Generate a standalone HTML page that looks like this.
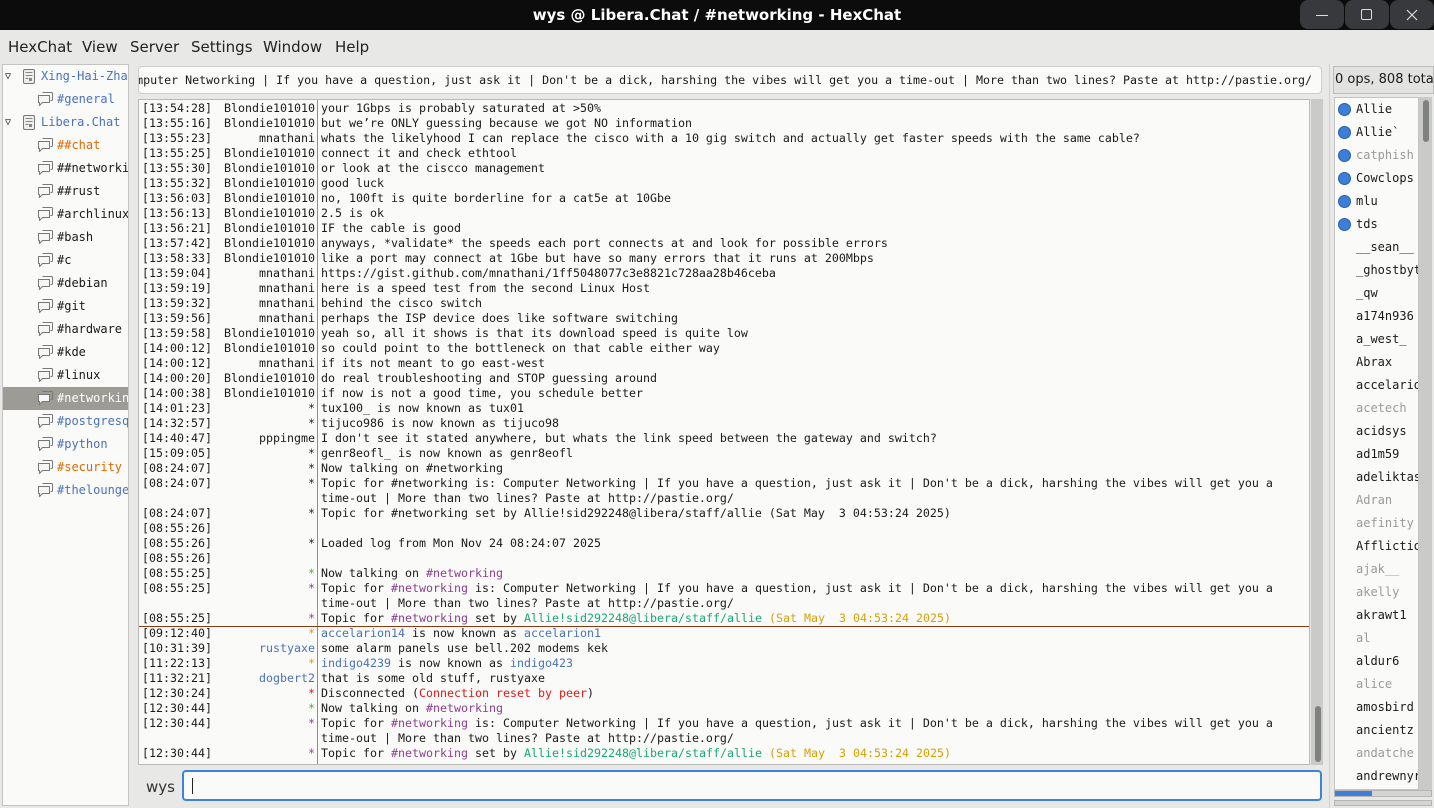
<!DOCTYPE html>
<html><head><meta charset="utf-8"><style>
*{margin:0;padding:0;box-sizing:border-box}
body{width:1434px;height:808px;overflow:hidden;background:#e8e8e7;font-family:"DejaVu Sans Mono","Liberation Mono",monospace;font-size:11.64px;color:#1a1a1a;position:relative}
.abs{position:absolute}
#title{left:0;top:0;width:1434px;height:30px;background:#0c0c0c;color:#fff;font-family:"DejaVu Sans","Liberation Sans",sans-serif;font-weight:bold;font-size:15px;text-align:center;line-height:30px}
.wb{top:0;width:44px;height:29px;background:#38393c;border-radius:8px}
#menu{left:0;top:30px;width:1434px;height:32px;font-family:"DejaVu Sans","Liberation Sans",sans-serif;font-size:15px;color:#222}
#menu span{position:absolute;top:8px}
#tree{left:2px;top:64px;width:127px;height:742px;background:#fafaf9;border:1px solid #c4c4c2;overflow:hidden;font-size:12px}
.tr{position:absolute;height:23px;line-height:23px;white-space:nowrap;left:0;width:127px}
.ic{position:absolute;top:3px}
#topic{left:138px;top:66px;width:1184px;height:28px;background:#fafaf9;border:1px solid #cfcfcd;border-radius:4px;overflow:hidden;white-space:nowrap;line-height:26px}
#chat{left:138px;top:99px;width:1172px;height:666px;background:#fafaf9;border:1px solid #b9b9b7;overflow:hidden}
.l{position:absolute;left:0;height:15px;line-height:15px;white-space:pre;width:1170px}
.ts{position:absolute;left:3px}
.nk{position:absolute;right:994px;text-align:right}
.mg{position:absolute;left:182px}
#sep{left:178px;top:0;width:1px;height:666px;background:#8e8e8c}
.g{color:#5fa81c}.p{color:#8b3f8e}.y{color:#d8a000}.r{color:#e01818}.b{color:#4a72b8}.t{color:#19a778}.gr{color:#9a9a98}.o{color:#e06a00}
#ul{left:1334px;top:97px;width:85px;height:693px;background:#fafaf9;border:1px solid #c4c4c2;overflow:hidden}
.u{position:absolute;left:21px;height:23px;line-height:23px;white-space:nowrap;font-size:12px}
.dot{position:absolute;top:5px;width:13px;height:13px;border-radius:50%;background:#3d7ed8;border:1px solid #2a5fa8}
</style></head><body>
<svg width="0" height="0" style="position:absolute"><defs>
<g id="bub"><path d="M5.5 1.5h9a1 1 0 0 1 1 1v6a1 1 0 0 1-1 1h-1" fill="none" stroke="#777"/><path d="M1.5 4.5h11v7h-7l-3 3v-3h-1z" fill="#f6f6f6" stroke="#777" stroke-linejoin="round"/></g>
<g id="srv"><rect x="2.5" y="1.5" width="11" height="14" rx="1.5" fill="#eee" stroke="#777"/><path d="M4.5 4.5h7M4.5 7.5h7M4.5 10.5h3" stroke="#888"/><rect x="8" y="10" width="3" height="3" fill="#888"/></g>
</defs></svg>
<div id="title" class="abs">wys @ Libera.Chat / #networking - HexChat</div>
<div class="abs wb" style="left:1300px"><div class="abs" style="left:16px;top:15px;width:12px;height:1px;background:#ddd"></div></div>
<div class="abs wb" style="left:1345px"><div class="abs" style="left:16px;top:9px;width:11px;height:11px;border:1px solid #ddd;border-radius:2px"></div></div>
<div class="abs wb" style="left:1390px"><svg class="abs" style="left:16px;top:9px" width="12" height="12"><path d="M1 1L11 11M11 1L1 11" stroke="#ddd" stroke-width="1.2"/></svg></div>
<div id="menu" class="abs"><span style="left:8px">HexChat</span><span style="left:82px">View</span><span style="left:130px">Server</span><span style="left:191px">Settings</span><span style="left:263px">Window</span><span style="left:335px">Help</span></div>

<div id="tree" class="abs">
<div class="tr" style="top:0"><span class="abs" style="left:2px;top:0;font-size:10px">▽</span><svg class="ic" style="left:18px" width="16" height="17"><use href="#srv"/></svg><span class="abs b" style="left:38px">Xing-Hai-Zhang</span></div>
<div class="tr" style="top:23px"><svg class="ic" style="left:34px" width="17" height="16"><use href="#bub"/></svg><span class="abs b" style="left:54px">#general</span></div>
<div class="tr" style="top:46px"><span class="abs" style="left:2px;top:0;font-size:10px">▽</span><svg class="ic" style="left:18px" width="16" height="17"><use href="#srv"/></svg><span class="abs b" style="left:38px">Libera.Chat</span></div>
<div class="tr" style="top:69px"><svg class="ic" style="left:34px" width="17" height="16"><use href="#bub"/></svg><span class="abs o" style="left:54px">##chat</span></div>
<div class="tr" style="top:92px"><svg class="ic" style="left:34px" width="17" height="16"><use href="#bub"/></svg><span class="abs" style="left:54px">##networking</span></div>
<div class="tr" style="top:115px"><svg class="ic" style="left:34px" width="17" height="16"><use href="#bub"/></svg><span class="abs" style="left:54px">##rust</span></div>
<div class="tr" style="top:138px"><svg class="ic" style="left:34px" width="17" height="16"><use href="#bub"/></svg><span class="abs" style="left:54px">#archlinux</span></div>
<div class="tr" style="top:161px"><svg class="ic" style="left:34px" width="17" height="16"><use href="#bub"/></svg><span class="abs" style="left:54px">#bash</span></div>
<div class="tr" style="top:184px"><svg class="ic" style="left:34px" width="17" height="16"><use href="#bub"/></svg><span class="abs" style="left:54px">#c</span></div>
<div class="tr" style="top:207px"><svg class="ic" style="left:34px" width="17" height="16"><use href="#bub"/></svg><span class="abs" style="left:54px">#debian</span></div>
<div class="tr" style="top:230px"><svg class="ic" style="left:34px" width="17" height="16"><use href="#bub"/></svg><span class="abs" style="left:54px">#git</span></div>
<div class="tr" style="top:253px"><svg class="ic" style="left:34px" width="17" height="16"><use href="#bub"/></svg><span class="abs" style="left:54px">#hardware</span></div>
<div class="tr" style="top:276px"><svg class="ic" style="left:34px" width="17" height="16"><use href="#bub"/></svg><span class="abs" style="left:54px">#kde</span></div>
<div class="tr" style="top:299px"><svg class="ic" style="left:34px" width="17" height="16"><use href="#bub"/></svg><span class="abs" style="left:54px">#linux</span></div>
<div class="tr" style="top:322px;background:#9d9b95;color:#fff"><svg class="ic" style="left:34px" width="17" height="16"><use href="#bub"/></svg><span class="abs" style="left:54px">#networking</span></div>
<div class="tr" style="top:345px"><svg class="ic" style="left:34px" width="17" height="16"><use href="#bub"/></svg><span class="abs b" style="left:54px">#postgresql</span></div>
<div class="tr" style="top:368px"><svg class="ic" style="left:34px" width="17" height="16"><use href="#bub"/></svg><span class="abs b" style="left:54px">#python</span></div>
<div class="tr" style="top:391px"><svg class="ic" style="left:34px" width="17" height="16"><use href="#bub"/></svg><span class="abs o" style="left:54px">#security</span></div>
<div class="tr" style="top:414px"><svg class="ic" style="left:34px" width="17" height="16"><use href="#bub"/></svg><span class="abs b" style="left:54px">#thelounge</span></div>
</div>

<div id="topic" class="abs"><span class="abs" style="right:9px;top:0">Computer Networking | If you have a question, just ask it | Don't be a dick, harshing the vibes will get you a time-out | More than two lines? Paste at http://pastie.org/</span></div>

<div id="chat" class="abs">
<div id="sep" class="abs"></div>
<div class="l" style="top:1px"><span class="ts">[13:54:28]</span><span class="nk">Blondie101010</span><span class="mg">your 1Gbps is probably saturated at &gt;50%</span></div>
<div class="l" style="top:16px"><span class="ts">[13:55:16]</span><span class="nk">Blondie101010</span><span class="mg">but we’re ONLY guessing because we got NO information</span></div>
<div class="l" style="top:31px"><span class="ts">[13:55:23]</span><span class="nk">mnathani</span><span class="mg">whats the likelyhood I can replace the cisco with a 10 gig switch and actually get faster speeds with the same cable?</span></div>
<div class="l" style="top:46px"><span class="ts">[13:55:25]</span><span class="nk">Blondie101010</span><span class="mg">connect it and check ethtool</span></div>
<div class="l" style="top:61px"><span class="ts">[13:55:30]</span><span class="nk">Blondie101010</span><span class="mg">or look at the ciscco management</span></div>
<div class="l" style="top:76px"><span class="ts">[13:55:32]</span><span class="nk">Blondie101010</span><span class="mg">good luck</span></div>
<div class="l" style="top:91px"><span class="ts">[13:56:03]</span><span class="nk">Blondie101010</span><span class="mg">no, 100ft is quite borderline for a cat5e at 10Gbe</span></div>
<div class="l" style="top:106px"><span class="ts">[13:56:13]</span><span class="nk">Blondie101010</span><span class="mg">2.5 is ok</span></div>
<div class="l" style="top:121px"><span class="ts">[13:56:21]</span><span class="nk">Blondie101010</span><span class="mg">IF the cable is good</span></div>
<div class="l" style="top:136px"><span class="ts">[13:57:42]</span><span class="nk">Blondie101010</span><span class="mg">anyways, *validate* the speeds each port connects at and look for possible errors</span></div>
<div class="l" style="top:151px"><span class="ts">[13:58:33]</span><span class="nk">Blondie101010</span><span class="mg">like a port may connect at 1Gbe but have so many errors that it runs at 200Mbps</span></div>
<div class="l" style="top:166px"><span class="ts">[13:59:04]</span><span class="nk">mnathani</span><span class="mg">https://gist.github.com/mnathani/1ff5048077c3e8821c728aa28b46ceba</span></div>
<div class="l" style="top:181px"><span class="ts">[13:59:19]</span><span class="nk">mnathani</span><span class="mg">here is a speed test from the second Linux Host</span></div>
<div class="l" style="top:196px"><span class="ts">[13:59:32]</span><span class="nk">mnathani</span><span class="mg">behind the cisco switch</span></div>
<div class="l" style="top:211px"><span class="ts">[13:59:56]</span><span class="nk">mnathani</span><span class="mg">perhaps the ISP device does like software switching</span></div>
<div class="l" style="top:226px"><span class="ts">[13:59:58]</span><span class="nk">Blondie101010</span><span class="mg">yeah so, all it shows is that its download speed is quite low</span></div>
<div class="l" style="top:241px"><span class="ts">[14:00:12]</span><span class="nk">Blondie101010</span><span class="mg">so could point to the bottleneck on that cable either way</span></div>
<div class="l" style="top:256px"><span class="ts">[14:00:12]</span><span class="nk">mnathani</span><span class="mg">if its not meant to go east-west</span></div>
<div class="l" style="top:271px"><span class="ts">[14:00:20]</span><span class="nk">Blondie101010</span><span class="mg">do real troubleshooting and STOP guessing around</span></div>
<div class="l" style="top:286px"><span class="ts">[14:00:38]</span><span class="nk">Blondie101010</span><span class="mg">if now is not a good time, you schedule better</span></div>
<div class="l" style="top:301px"><span class="ts">[14:01:23]</span><span class="nk">*</span><span class="mg">tux100_ is now known as tux01</span></div>
<div class="l" style="top:316px"><span class="ts">[14:32:57]</span><span class="nk">*</span><span class="mg">tijuco986 is now known as tijuco98</span></div>
<div class="l" style="top:331px"><span class="ts">[14:40:47]</span><span class="nk">pppingme</span><span class="mg">I don't see it stated anywhere, but whats the link speed between the gateway and switch?</span></div>
<div class="l" style="top:346px"><span class="ts">[15:09:05]</span><span class="nk">*</span><span class="mg">genr8eofl_ is now known as genr8eofl</span></div>
<div class="l" style="top:361px"><span class="ts">[08:24:07]</span><span class="nk">*</span><span class="mg">Now talking on #networking</span></div>
<div class="l" style="top:376px"><span class="ts">[08:24:07]</span><span class="nk">*</span><span class="mg">Topic for #networking is: Computer Networking | If you have a question, just ask it | Don't be a dick, harshing the vibes will get you a</span></div>
<div class="l" style="top:391px"><span class="mg">time-out | More than two lines? Paste at http://pastie.org/</span></div>
<div class="l" style="top:406px"><span class="ts">[08:24:07]</span><span class="nk">*</span><span class="mg">Topic for #networking set by Allie!sid292248@libera/staff/allie (Sat May  3 04:53:24 2025)</span></div>
<div class="l" style="top:421px"><span class="ts">[08:55:26]</span></div>
<div class="l" style="top:436px"><span class="ts">[08:55:26]</span><span class="nk">*</span><span class="mg">Loaded log from Mon Nov 24 08:24:07 2025</span></div>
<div class="l" style="top:451px"><span class="ts">[08:55:26]</span></div>
<div class="l" style="top:466px"><span class="ts">[08:55:25]</span><span class="nk g">*</span><span class="mg">Now talking on <span class="p">#networking</span></span></div>
<div class="l" style="top:481px"><span class="ts">[08:55:25]</span><span class="nk p">*</span><span class="mg">Topic for <span class="p">#networking</span> is: Computer Networking | If you have a question, just ask it | Don't be a dick, harshing the vibes will get you a</span></div>
<div class="l" style="top:496px"><span class="mg">time-out | More than two lines? Paste at http://pastie.org/</span></div>
<div class="l" style="top:511px"><span class="ts">[08:55:25]</span><span class="nk p">*</span><span class="mg">Topic for <span class="p">#networking</span> set by <span class="t">Allie!sid292248@libera/staff/allie</span> <span class="y">(Sat May  3 04:53:24 2025)</span></span></div>
<div class="abs" style="left:0;top:526px;width:1172px;height:1px;background:#8b3a14"></div>
<div class="l" style="top:526px"><span class="ts">[09:12:40]</span><span class="nk y">*</span><span class="mg"><span class="b">accelarion14</span> is now known as <span class="b">accelarion1</span></span></div>
<div class="l" style="top:541px"><span class="ts">[10:31:39]</span><span class="nk b">rustyaxe</span><span class="mg">some alarm panels use bell.202 modems kek</span></div>
<div class="l" style="top:556px"><span class="ts">[11:22:13]</span><span class="nk y">*</span><span class="mg"><span class="b">indigo4239</span> is now known as <span class="b">indigo423</span></span></div>
<div class="l" style="top:571px"><span class="ts">[11:32:21]</span><span class="nk b">dogbert2</span><span class="mg">that is some old stuff, rustyaxe</span></div>
<div class="l" style="top:586px"><span class="ts">[12:30:24]</span><span class="nk r">*</span><span class="mg">Disconnected (<span class="r">Connection reset by peer</span>)</span></div>
<div class="l" style="top:601px"><span class="ts">[12:30:44]</span><span class="nk g">*</span><span class="mg">Now talking on <span class="p">#networking</span></span></div>
<div class="l" style="top:616px"><span class="ts">[12:30:44]</span><span class="nk p">*</span><span class="mg">Topic for <span class="p">#networking</span> is: Computer Networking | If you have a question, just ask it | Don't be a dick, harshing the vibes will get you a</span></div>
<div class="l" style="top:631px"><span class="mg">time-out | More than two lines? Paste at http://pastie.org/</span></div>
<div class="l" style="top:646px"><span class="ts">[12:30:44]</span><span class="nk p">*</span><span class="mg">Topic for <span class="p">#networking</span> set by <span class="t">Allie!sid292248@libera/staff/allie</span> <span class="y">(Sat May  3 04:53:24 2025)</span></span></div>
</div>
<div class="abs" style="left:1311px;top:99px;width:12px;height:666px;background:#cacac8"></div>
<div class="abs" style="left:1315px;top:706px;width:6px;height:56px;background:#7f8180;border-radius:3px"></div>

<div class="abs" style="left:146px;top:778px;font-family:'DejaVu Sans','Liberation Sans',sans-serif;font-size:15px;color:#333">wys</div>
<div class="abs" style="left:182px;top:770px;width:1140px;height:31px;background:#fafaf9;border:2px solid #3d84d6;border-radius:4px"><div class="abs" style="left:8px;top:6px;width:1px;height:16px;background:#222"></div></div>

<div class="abs" style="left:1329px;top:64px;width:1px;height:744px;background:#d0d0ce"></div>
<div class="abs" style="left:1333px;top:66px;width:101px;height:28px;background:#e2e2e0;border:1px solid #bdbdbb;font-family:'DejaVu Sans','Liberation Sans',sans-serif;font-size:13px;line-height:26px;white-space:nowrap;overflow:hidden;padding-left:1px">0 ops, 808 total</div>
<div id="ul" class="abs">
<div class="u" style="top:0"><span class="dot" style="left:-18px"></span>Allie</div>
<div class="u" style="top:23px"><span class="dot" style="left:-18px"></span>Allie`</div>
<div class="u gr" style="top:46px"><span class="dot" style="left:-18px"></span>catphish</div>
<div class="u" style="top:69px"><span class="dot" style="left:-18px"></span>Cowclops</div>
<div class="u" style="top:92px"><span class="dot" style="left:-18px"></span>mlu</div>
<div class="u" style="top:115px"><span class="dot" style="left:-18px"></span>tds</div>
<div class="u" style="top:138px">__sean__</div>
<div class="u" style="top:161px">_ghostbyte</div>
<div class="u" style="top:184px">_qw</div>
<div class="u" style="top:207px">a174n936</div>
<div class="u" style="top:230px">a_west_</div>
<div class="u" style="top:253px">Abrax</div>
<div class="u" style="top:276px">accelarion</div>
<div class="u gr" style="top:299px">acetech</div>
<div class="u" style="top:322px">acidsys</div>
<div class="u" style="top:345px">ad1m59</div>
<div class="u" style="top:368px">adeliktas</div>
<div class="u gr" style="top:391px">Adran</div>
<div class="u gr" style="top:414px">aefinity</div>
<div class="u" style="top:437px">Affliction</div>
<div class="u gr" style="top:460px">ajak__</div>
<div class="u gr" style="top:483px">akelly</div>
<div class="u" style="top:506px">akrawt1</div>
<div class="u gr" style="top:529px">al</div>
<div class="u" style="top:552px">aldur6</div>
<div class="u gr" style="top:575px">alice</div>
<div class="u" style="top:598px">amosbird</div>
<div class="u" style="top:621px">ancientz</div>
<div class="u gr" style="top:644px">andatche</div>
<div class="u" style="top:667px">andrewnyr</div>
</div>
<div class="abs" style="left:1419px;top:97px;width:13px;height:693px;background:#cacac8"></div>
<div class="abs" style="left:1423px;top:100px;width:6px;height:42px;background:#7f8180;border-radius:3px"></div>
<div class="abs" style="left:1334px;top:790px;width:98px;height:7px;background:#d4d4d2;border:1px solid #b5b5b3"></div>
<div class="abs" style="left:1335px;top:791px;width:37px;height:5px;background:#3d7ed8"></div>
<div class="abs" style="left:1334px;top:800px;width:98px;height:6px;background:#d4d4d2;border:1px solid #b5b5b3"></div>
</body></html>
